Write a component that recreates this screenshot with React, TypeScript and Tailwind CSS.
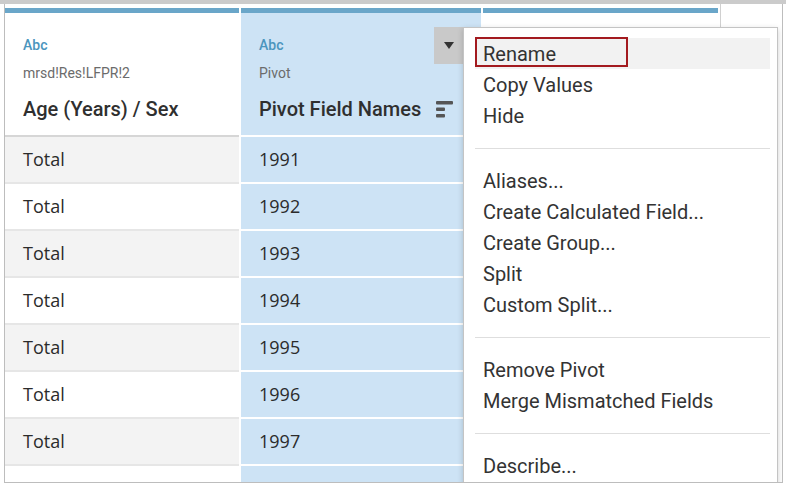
import React from 'react';

const head = { fontFamily: 'Roboto, "Liberation Sans", sans-serif' };
const cell = { fontFamily: '"Open Sans", "Liberation Sans", sans-serif' };

const years = ['1991', '1992', '1993', '1994', '1995', '1996', '1997', ''];
const totals = ['Total', 'Total', 'Total', 'Total', 'Total', 'Total', 'Total', ''];
const hidden = ['', '', '', '', '', '', '', ''];

const menu: (string | null)[] = [
  'Rename',
  'Copy Values',
  'Hide',
  null,
  'Aliases...',
  'Create Calculated Field...',
  'Create Group...',
  'Split',
  'Custom Split...',
  null,
  'Remove Pivot',
  'Merge Mismatched Fields',
  null,
  'Describe...',
];

function Header({ source, title, sort }: { source: string; title: string; sort?: boolean }) {
  return (
    <div className="h-[122px] pl-[18px] pt-[24px]" style={head}>
      <div className="text-[14px] leading-[16px] font-medium text-[#4b95bd]">{source ? 'Abc' : ''}</div>
      <div className="mt-[11px] text-[14px] leading-[18px] text-[#6b6b6b]">{source}</div>
      <div className="mt-[15px] flex items-center justify-between pr-[27px]">
        <span className="text-[20px] leading-[24px] font-medium text-[#2f2f2f]">{title}</span>
        {sort && (
          <svg width="18" height="17" viewBox="0 0 18 17">
            <rect x="0" y="0" width="17" height="3.5" rx="1" fill="#555" />
            <rect x="0" y="6.5" width="9" height="3.5" rx="1" fill="#555" />
            <rect x="0" y="13" width="9" height="3.5" rx="1" fill="#555" />
          </svg>
        )}
      </div>
    </div>
  );
}

function Column({
  width,
  bg,
  source,
  title,
  sort,
  values,
  pivot,
}: {
  width: string;
  bg: string;
  source: string;
  title: string;
  sort?: boolean;
  values: string[];
  pivot?: boolean;
}) {
  return (
    <div className={`${width} flex flex-col pt-[4px]`}>
      <div className="h-[5px] bg-[#6aa6c9]" />
      <div className={bg}>
        <Header source={source} title={title} sort={sort} />
      </div>
      <div className={pivot ? 'h-[2px] bg-white' : 'h-[2px] bg-[#d6d6d6]'} />
      {values.map((v, i) => (
        <div
          key={i}
          className={`h-[47px] shrink-0 border-b-2 pl-[18px] flex items-center text-[18px] text-[#2b2b2b] ${
            pivot
              ? 'bg-[#cde3f5] border-white'
              : i % 2 === 0
                ? 'bg-[#f3f3f3] border-[#e6e6e6]'
                : 'bg-white border-[#e6e6e6]'
          }`}
          style={cell}
        >
          {v}
        </div>
      ))}
    </div>
  );
}

export default function App() {
  return (
    <div className="w-[786px] h-[486px] bg-white">
      <div className="h-[4px] bg-[#cbcbcb]" />
      <div className="relative ml-[4px] w-[779px] h-[479px] border-x border-b border-[#bdbdbd] overflow-hidden bg-white">
        <div className="flex gap-[2px]">
          <Column width="w-[234px]" bg="bg-white" source="mrsd!Res!LFPR!2" title="Age (Years) / Sex" values={totals} />
          <Column width="w-[240px]" bg="bg-[#cde3f5]" source="Pivot" title="Pivot Field Names" sort values={years} pivot />
          <Column width="w-[235px]" bg="bg-white" source="" title="" values={hidden} />
          <div className="flex-1 border-l border-[#d0d0d0]" />
        </div>

        {/* hover dropdown on the pivot column */}
        <div className="absolute left-[429px] top-[23px] w-[29px] h-[37px] bg-[#c9c9c9] flex items-center justify-center">
          <svg width="10" height="7" viewBox="0 0 10 7">
            <path d="M0 0 H10 L5 7 Z" fill="#333" />
          </svg>
        </div>

        {/* context menu */}
        <div
          className="absolute left-[458px] top-[23px] w-[315px] h-[480px] bg-white border border-[#c4c4c4] shadow-[0_2px_6px_rgba(0,0,0,0.18)] pt-[10px] pl-[11px] pr-[7px]"
          style={head}
        >
          {menu.map((m, i) =>
            m === null ? (
              <div key={i} className="h-[34px] flex items-center">
                <div className="h-px w-full bg-[#dedede]" />
              </div>
            ) : (
              <div
                key={i}
                className={`h-[31px] pl-[8px] flex items-center text-[20px] text-[#333] ${i === 0 ? 'bg-[#f2f2f2]' : ''}`}
              >
                {m}
              </div>
            ),
          )}
        </div>

        {/* annotation box around Rename */}
        <div className="absolute left-[470px] top-[33px] w-[153px] h-[30px] border-2 border-[#a31a1f]" />
      </div>
    </div>
  );
}
